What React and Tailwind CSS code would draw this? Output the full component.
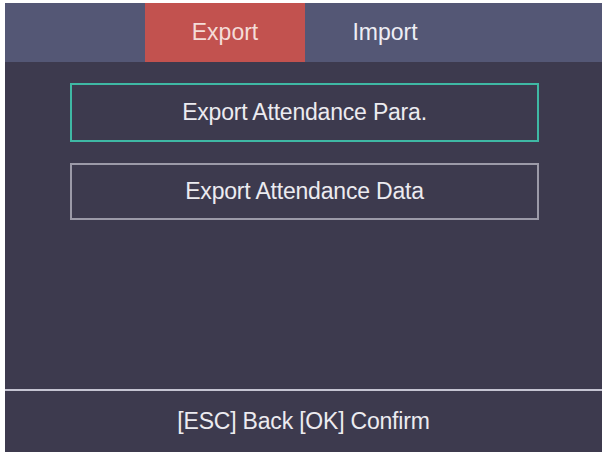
export default function App() {
  return (
    <div className="h-[454px] w-[604px] bg-white pl-[5px] pt-[3px] pr-[2px] pb-[2px] font-['Liberation_Sans',Arial,sans-serif]">
      <div className="flex h-full w-full flex-col bg-[#3d3a4e]">
        <div className="flex h-[59px] bg-[#545775]">
          <div className="w-[140px]" />
          <div className="flex w-[160px] items-center justify-center bg-[#c2524f] text-[23px] text-[#f4dcd8]">
            Export
          </div>
          <div className="flex w-[160px] items-center justify-center text-[23px] text-[#eeeef4]">
            Import
          </div>
        </div>
        <div className="flex flex-1 flex-col gap-[21px] pl-[65px] pr-[63px] pt-[21px]">
          <div className="flex h-[59px] items-center justify-center border-2 border-[#3fb8a4] text-[23px] tracking-[-0.2px] text-[#ecebf0]">
            Export Attendance Para.
          </div>
          <div className="flex h-[57px] items-center justify-center border-2 border-[#9c9aa8] text-[23px] tracking-[-0.2px] text-[#ecebf0]">
            Export Attendance Data
          </div>
        </div>
        <div className="h-[2px] bg-[#c5c4d2]" />
        <div className="flex h-[61px] items-center justify-center text-[23px] tracking-[-0.2px] text-[#ecebf0]">
          [ESC] Back [OK] Confirm
        </div>
      </div>
    </div>
  )
}
